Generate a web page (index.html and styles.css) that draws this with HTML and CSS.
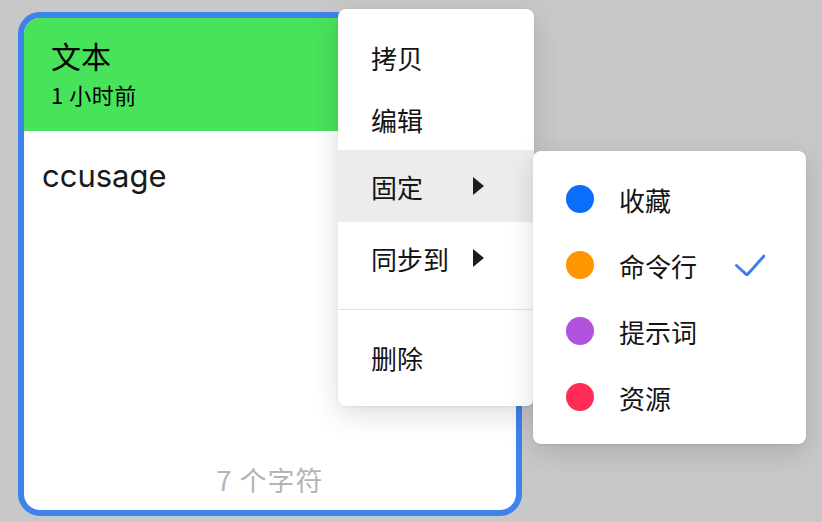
FILE: index.html
```html
<!DOCTYPE html>
<html lang="zh-CN">
<head>
    <meta charset="UTF-8">
    <meta name="viewport" content="width=device-width, initial-scale=1.0">
    <title>剪贴板</title>
    <link rel="stylesheet" href="styles.css">
</head>
<body>
    <!-- Clip card -->
    <div class="card">
        <div class="card-head">
            <div class="card-title">文本</div>
            <div class="card-time">1 小时前</div>
        </div>
        <div class="card-body">ccusage</div>
        <div class="card-foot">7 个字符</div>
    </div>

    <!-- Context menu -->
    <div class="menu">
        <div class="menu-item">拷贝</div>
        <div class="menu-item">编辑</div>
        <div class="menu-item has-sub active">
            <span class="menu-label">固定</span>
            <span class="menu-arrow"></span>
        </div>
        <div class="menu-item has-sub">
            <span class="menu-label">同步到</span>
            <span class="menu-arrow"></span>
        </div>
        <div class="menu-sep"></div>
        <div class="menu-item">删除</div>
    </div>

    <!-- Pin submenu -->
    <div class="submenu">
        <div class="sub-item">
            <span class="dot dot-blue"></span>
            <span class="sub-label">收藏</span>
            <span class="sub-check"></span>
        </div>
        <div class="sub-item">
            <span class="dot dot-orange"></span>
            <span class="sub-label">命令行</span>
            <span class="sub-check">
                <svg width="30" height="22" viewBox="0 0 30 22">
                    <polyline points="1.5,11.5 12,21 29,2" fill="none" stroke="#3c80e6" stroke-width="3" stroke-linecap="round" stroke-linejoin="round"/>
                </svg>
            </span>
        </div>
        <div class="sub-item">
            <span class="dot dot-purple"></span>
            <span class="sub-label">提示词</span>
            <span class="sub-check"></span>
        </div>
        <div class="sub-item">
            <span class="dot dot-red"></span>
            <span class="sub-label">资源</span>
            <span class="sub-check"></span>
        </div>
    </div>
</body>
</html>
```

FILE: styles.css
```css
/* General styling */
body {
    margin: 0;
    height: 522px;
    overflow: hidden;
    position: relative;
    background-color: #c8c8c8;
    font-family: "Noto Sans CJK SC", sans-serif;
    color: #141414;
}

/* Clip card */
.card {
    margin: 12px 0 0 18px;
    width: 504px;
    height: 504px;
    box-sizing: border-box;
    border: 6px solid #3e83ec;
    border-radius: 22px;
    background: #fff;
    overflow: hidden;
    display: flex;
    flex-direction: column;
}

.card-head {
    background-color: #47e35a;
    height: 113px;
    box-sizing: border-box;
    padding: 18px 27px 0;
    color: #000;
}

.card-title {
    font-size: 30px;
    line-height: 39px;
}

.card-time {
    margin-top: 5px;
    font-size: 22px;
    line-height: 28px;
    letter-spacing: 0.5px;
}

.card-body {
    flex: 1;
    padding: 25px 18px 0;
    font-family: Inter, sans-serif;
    font-size: 31px;
    line-height: 40px;
    color: #1a1a1a;
}

.card-foot {
    text-align: center;
    font-size: 27px;
    line-height: 36px;
    letter-spacing: 1px;
    padding-bottom: 12px;
    color: #b4b4b4;
}

/* Menus */
.menu, .submenu {
    position: absolute;
    background: #fff;
    border-radius: 8px;
    box-shadow: 0 8px 28px rgba(0, 0, 0, 0.14), 0 1px 3px rgba(0, 0, 0, 0.06);
    font-size: 26px;
}

.menu {
    left: 338px;
    top: 9px;
    width: 196px;
    padding: 17px 0 18px;
}

.menu-item {
    height: 62px;
    display: flex;
    align-items: center;
    padding: 0 50px 0 33px;
}

.menu-item.has-sub {
    height: 72px;
}

.menu-item.active {
    background-color: #ececec;
}

.menu-label {
    flex: 1;
}

.menu-arrow {
    width: 0;
    height: 0;
    border-top: 9px solid transparent;
    border-bottom: 9px solid transparent;
    border-left: 11px solid #1d1d1d;
}

.menu-sep {
    height: 1px;
    margin: 15px 0 16px;
    background-color: #e2e2e2;
}

.submenu {
    left: 533px;
    top: 151px;
    width: 273px;
    padding: 15px 0 14px;
}

.sub-item {
    height: 66px;
    display: flex;
    align-items: center;
    padding: 0 41px 0 33px;
}

.dot {
    width: 28px;
    height: 28px;
    border-radius: 50%;
    margin-right: 25px;
}

.dot-blue { background-color: #0a6efa; }
.dot-orange { background-color: #ff9500; }
.dot-purple { background-color: #af52de; }
.dot-red { background-color: #ff2d55; }

.sub-label {
    flex: 1;
}

.sub-check {
    width: 30px;
    height: 22px;
    display: flex;
}
```
